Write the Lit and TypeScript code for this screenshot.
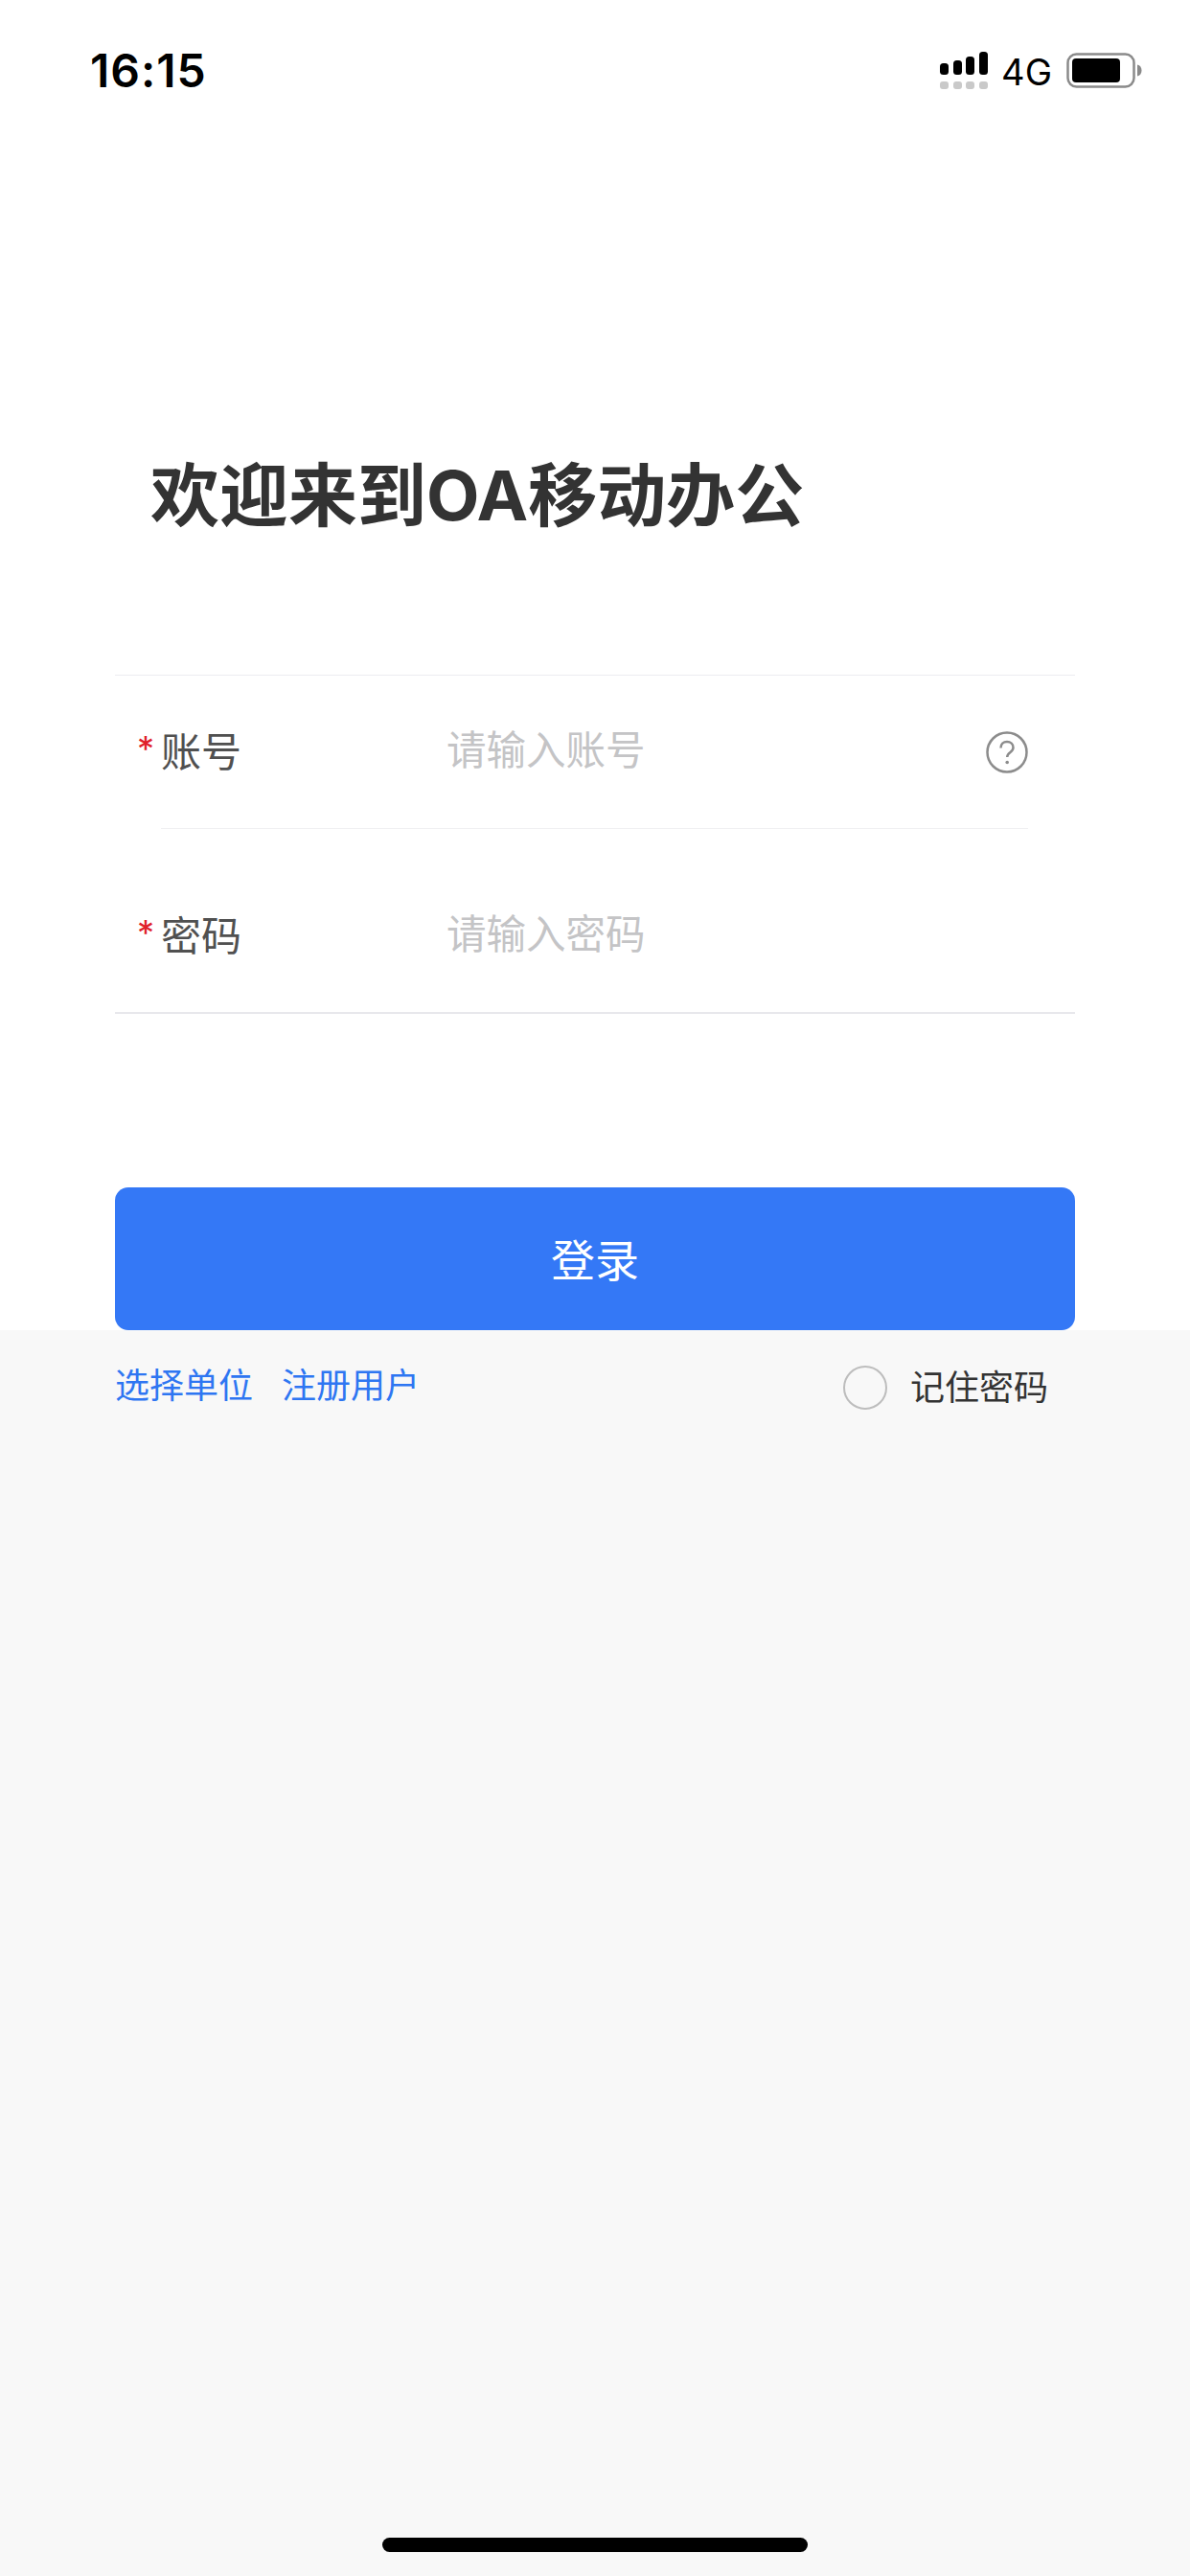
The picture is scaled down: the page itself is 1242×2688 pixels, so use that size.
import { LitElement, html, css } from 'lit';
import { customElement } from 'lit/decorators.js';

@customElement('app-root')
export class AppRoot extends LitElement {
  static styles = css`
    :host {
      display: flex;
      flex-direction: column;
      width: 1242px;
      height: 2688px;
      background: #fff;
      font-family: Inter, 'Noto Sans CJK SC', sans-serif;
      overflow: hidden;
    }

    .status {
      height: 148px;
      flex: none;
      display: flex;
      align-items: flex-start;
      justify-content: space-between;
      padding: 0 49px 0 94px;
      box-sizing: border-box;
    }

    .time {
      font-size: 48px;
      font-weight: 600;
      letter-spacing: 1px;
      line-height: 56px;
      margin-top: 46px;
      color: #000;
    }

    .status-icons {
      display: flex;
      align-items: center;
      margin-top: 54px;
      height: 40px;
    }

    .net {
      font-size: 38px;
      line-height: 40px;
      color: #000;
      margin: 2px 15px 0 14px;
    }

    .hero {
      flex: none;
      height: 556px;
      box-sizing: border-box;
      padding: 319px 0 0 157px;
      font-size: 72px;
      line-height: 100px;
      font-weight: 700;
      color: #333;
    }

    .form {
      flex: none;
      margin: 0 120px;
      border-top: 1px solid #ececf0;
      border-bottom: 2px solid #e8e8ec;
    }

    .row {
      display: flex;
      align-items: center;
      margin-left: 48px;
      margin-right: 49px;
    }

    .row.first {
      height: 159px;
      border-bottom: 1px solid #f0f0f2;
    }

    .row.second {
      height: 191px;
      padding-top: 32px;
      box-sizing: border-box;
    }

    .label {
      width: 298px;
      flex: none;
      font-size: 42px;
      line-height: 60px;
      color: #505050;
      position: relative;
    }

    .star {
      position: absolute;
      left: -25px;
      top: -4px;
      color: #e0202a;
      font-size: 36px;
    }

    .placeholder {
      flex: 1;
      font-size: 41.5px;
      line-height: 60px;
      color: #c4c4c6;
      margin-top: -4px;
    }

    .help {
      width: 44px;
      height: 44px;
      flex: none;
    }

    .login {
      flex: none;
      margin: 181px 120px 0;
      height: 149px;
      border-radius: 14px;
      background: #3478f6;
      color: #fff;
      display: flex;
      align-items: center;
      justify-content: center;
      font-size: 46px;
      padding-bottom: 4px;
      box-sizing: border-box;
    }

    .bottom {
      flex: 1;
      background: #f8f8f8;
      display: flex;
      flex-direction: column;
      justify-content: space-between;
    }

    .links {
      display: flex;
      align-items: center;
      padding: 31px 120px 0;
      font-size: 36px;
      line-height: 50px;
      color: #2e76f2;
    }

    .links span + span {
      margin-left: 30px;
    }

    .remember {
      margin-left: auto;
      display: flex;
      align-items: center;
      color: #333;
      margin-right: 28px;
      padding-top: 4px;
    }

    .radio {
      width: 46px;
      height: 46px;
      box-sizing: border-box;
      border: 2px solid #bdbdbd;
      border-radius: 50%;
      margin-right: 24px;
    }

    .home {
      width: 444px;
      height: 15px;
      border-radius: 8px;
      background: #000;
      margin: 0 auto 25px;
    }
  `;

  render() {
    return html`
      <div class="status">
        <div class="time">16:15</div>
        <div class="status-icons">
          <svg width="50" height="40" viewBox="0 0 50 40">
            <rect x="0" y="12" width="9" height="12" rx="3.5" fill="#000"></rect>
            <rect x="14" y="9" width="9" height="15" rx="3.5" fill="#000"></rect>
            <rect x="27" y="5" width="9" height="19" rx="3.5" fill="#000"></rect>
            <rect x="41" y="0" width="9" height="24" rx="3.5" fill="#000"></rect>
            <rect x="0" y="31" width="9" height="8" rx="3" fill="#c9c9c9"></rect>
            <rect x="14" y="31" width="9" height="8" rx="3" fill="#c9c9c9"></rect>
            <rect x="27" y="31" width="9" height="8" rx="3" fill="#c9c9c9"></rect>
            <rect x="41" y="31" width="9" height="8" rx="3" fill="#c9c9c9"></rect>
          </svg>
          <span class="net">4G</span>
          <svg width="80" height="38" viewBox="0 0 80 38">
            <rect x="1.500" y="1.500" width="69" height="34" rx="9" fill="none" stroke="#8a8a8a" stroke-width="2.500"></rect>
            <rect x="6" y="6" width="50" height="25" rx="4" fill="#000"></rect>
            <path d="M74 12.500c3 .6 4.500 3 4.500 6s-1.500 5.400-4.500 6z" fill="#8a8a8a"></path>
          </svg>
        </div>
      </div>

      <div class="hero">欢迎来到OA移动办公</div>

      <div class="form">
        <div class="row first">
          <div class="label"><span class="star">*</span>账号</div>
          <div class="placeholder">请输入账号</div>
          <svg class="help" viewBox="0 0 44 44">
            <circle cx="22" cy="22" r="20.500" fill="none" stroke="#8c8c8c" stroke-width="2.500"></circle>
            <path d="M15.500 17.500c0-4 2.800-6.500 6.500-6.500s6.500 2.500 6.500 6c0 2.600-1.400 3.900-3.300 5.300-1.900 1.400-3 2.400-3 4.700" fill="none" stroke="#8c8c8c" stroke-width="2.500"></path>
            <circle cx="22.200" cy="32.500" r="1.800" fill="#8c8c8c"></circle>
          </svg>
        </div>
        <div class="row second">
          <div class="label"><span class="star">*</span>密码</div>
          <div class="placeholder">请输入密码</div>
        </div>
      </div>

      <div class="login">登录</div>

      <div class="bottom">
        <div class="links">
          <span>选择单位</span>
          <span>注册用户</span>
          <div class="remember">
            <div class="radio"></div>
            记住密码
          </div>
        </div>
        <div class="home"></div>
      </div>
    `;
  }
}
